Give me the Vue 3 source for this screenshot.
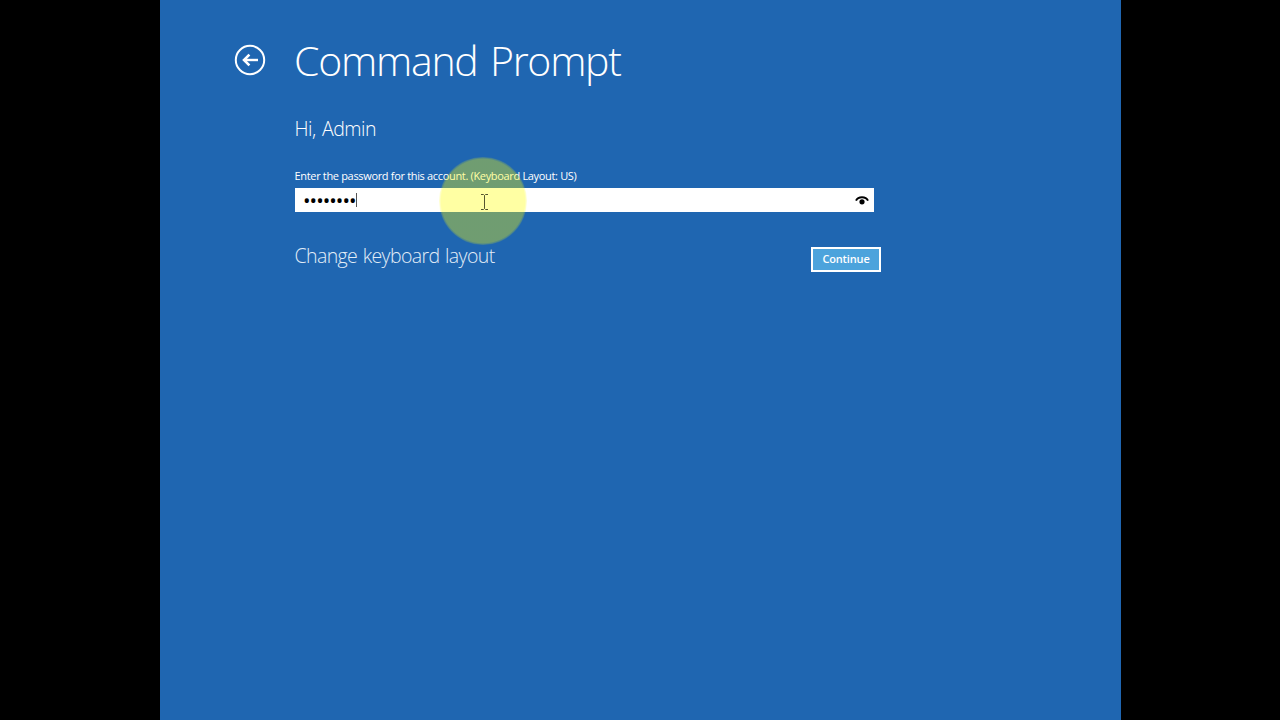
<template>
  <div class="stage">
    <main class="screen">
      <button class="back" aria-label="Back">
        <svg width="32" height="32" viewBox="0 0 32 32" fill="none" stroke="#fff">
          <circle cx="16" cy="16" r="14.2" stroke-width="2" />
          <path d="M24 16H10" stroke-width="2.4" />
          <path d="M15.4 10.6L10 16l5.4 5.4" stroke-width="2.6" />
        </svg>
      </button>

      <div class="content">
        <h1>Command Prompt</h1>
        <h2>Hi, {{ user }}</h2>
        <label for="password">Enter the password for this account. (Keyboard Layout: US)</label>
        <div class="field">
          <input id="password" v-model="password" type="password" autocomplete="off" />
          <span class="caret"></span>
          <svg class="reveal" width="14" height="10" viewBox="0 0 14 10">
            <path d="M1 5.6C3.2 1.1 10.8 1.1 13 5.6" fill="none" stroke="#000" stroke-width="2" />
            <circle cx="7" cy="6.8" r="2.6" />
          </svg>
        </div>
        <div class="actions">
          <a class="layout-link">Change keyboard layout</a>
          <button class="continue">Continue</button>
        </div>
      </div>

      <!-- mouse pointer with click highlight -->
      <div class="pointer">
        <svg width="9" height="16" viewBox="0 0 9 16" fill="none" stroke="#55552f" stroke-width="1">
          <path d="M1 .5h2.5l1 1 1-1H8M4.5 1.5v13M1 15.5h2.5l1-1 1 1H8" />
        </svg>
      </div>
    </main>
  </div>
</template>

<script setup>
import { ref } from 'vue'

const user = ref('Admin')
const password = ref('password')
</script>

<style>
body {
  background: #000;
}
</style>

<style scoped>
.stage {
  height: 100vh;
  display: flex;
  padding: 0 159px 0 160px;
  box-sizing: border-box;
  overflow: hidden;
  background: #000;
  font-family: 'Open Sans', sans-serif;
}

.screen {
  position: relative;
  flex: 1;
  display: flex;
  align-items: flex-start;
  padding-left: 74px;
  background: #1f66b1;
  color: #fff;
}

.back {
  width: 32px;
  height: 32px;
  margin: 44px 28px 0 0;
  padding: 0;
  border: none;
  background: none;
}

.back svg {
  display: block;
}

.content {
  width: 587px;
  padding-top: 30px;
}

h1 {
  margin: 0;
  font-size: 41px;
  font-weight: 340;
  line-height: 60px;
  letter-spacing: -1.25px;
  word-spacing: 3px;
  white-space: nowrap;
}

h2 {
  margin: 24px 0 0;
  padding-left: 0.5px;
  font-size: 19.5px;
  font-weight: 350;
  line-height: 30px;
  letter-spacing: -0.45px;
  word-spacing: 1.5px;
}

label {
  display: block;
  margin-top: 24px;
  padding-left: 0.5px;
  font-size: 11px;
  line-height: 16px;
  letter-spacing: -0.33px;
  white-space: nowrap;
}

.field {
  display: flex;
  align-items: center;
  width: 579px;
  height: 24px;
  margin: 4px 0 0 1px;
  padding: 0 5px 0 8px;
  box-sizing: border-box;
  background: #fff;
}

input {
  width: 53px;
  height: 20px;
  padding: 0;
  border: none;
  outline: none;
  background: none;
  color: #000;
  font-family: 'Open Sans', sans-serif;
  font-size: 20px;
  letter-spacing: -0.95px;
}

.caret {
  width: 1px;
  height: 14px;
  background: #555;
}

.reveal {
  margin-left: auto;
}

.actions {
  display: flex;
  justify-content: space-between;
  align-items: flex-start;
  padding-top: 29px;
}

.layout-link {
  padding-left: 0.5px;
  color: #e2edf8;
  font-size: 19.5px;
  font-weight: 350;
  line-height: 30px;
  letter-spacing: -0.6px;
  word-spacing: 1px;
}

.continue {
  width: 70px;
  height: 25px;
  margin-top: 6px;
  padding: 0 0 2px;
  border: 2px solid #fff;
  background: #4ca3dc;
  color: #fff;
  font-family: 'Open Sans', sans-serif;
  font-size: 11px;
  font-weight: 600;
  letter-spacing: -0.15px;
}

.pointer {
  position: absolute;
  left: 279px;
  top: 157px;
  width: 88px;
  height: 88px;
  display: flex;
  align-items: center;
  justify-content: center;
  border-radius: 50%;
  background: radial-gradient(closest-side, rgba(255, 255, 0, 0.36) 95%, rgba(255, 255, 0, 0.12));
}

.pointer svg {
  margin: 2px 0 0 3px;
}
</style>
